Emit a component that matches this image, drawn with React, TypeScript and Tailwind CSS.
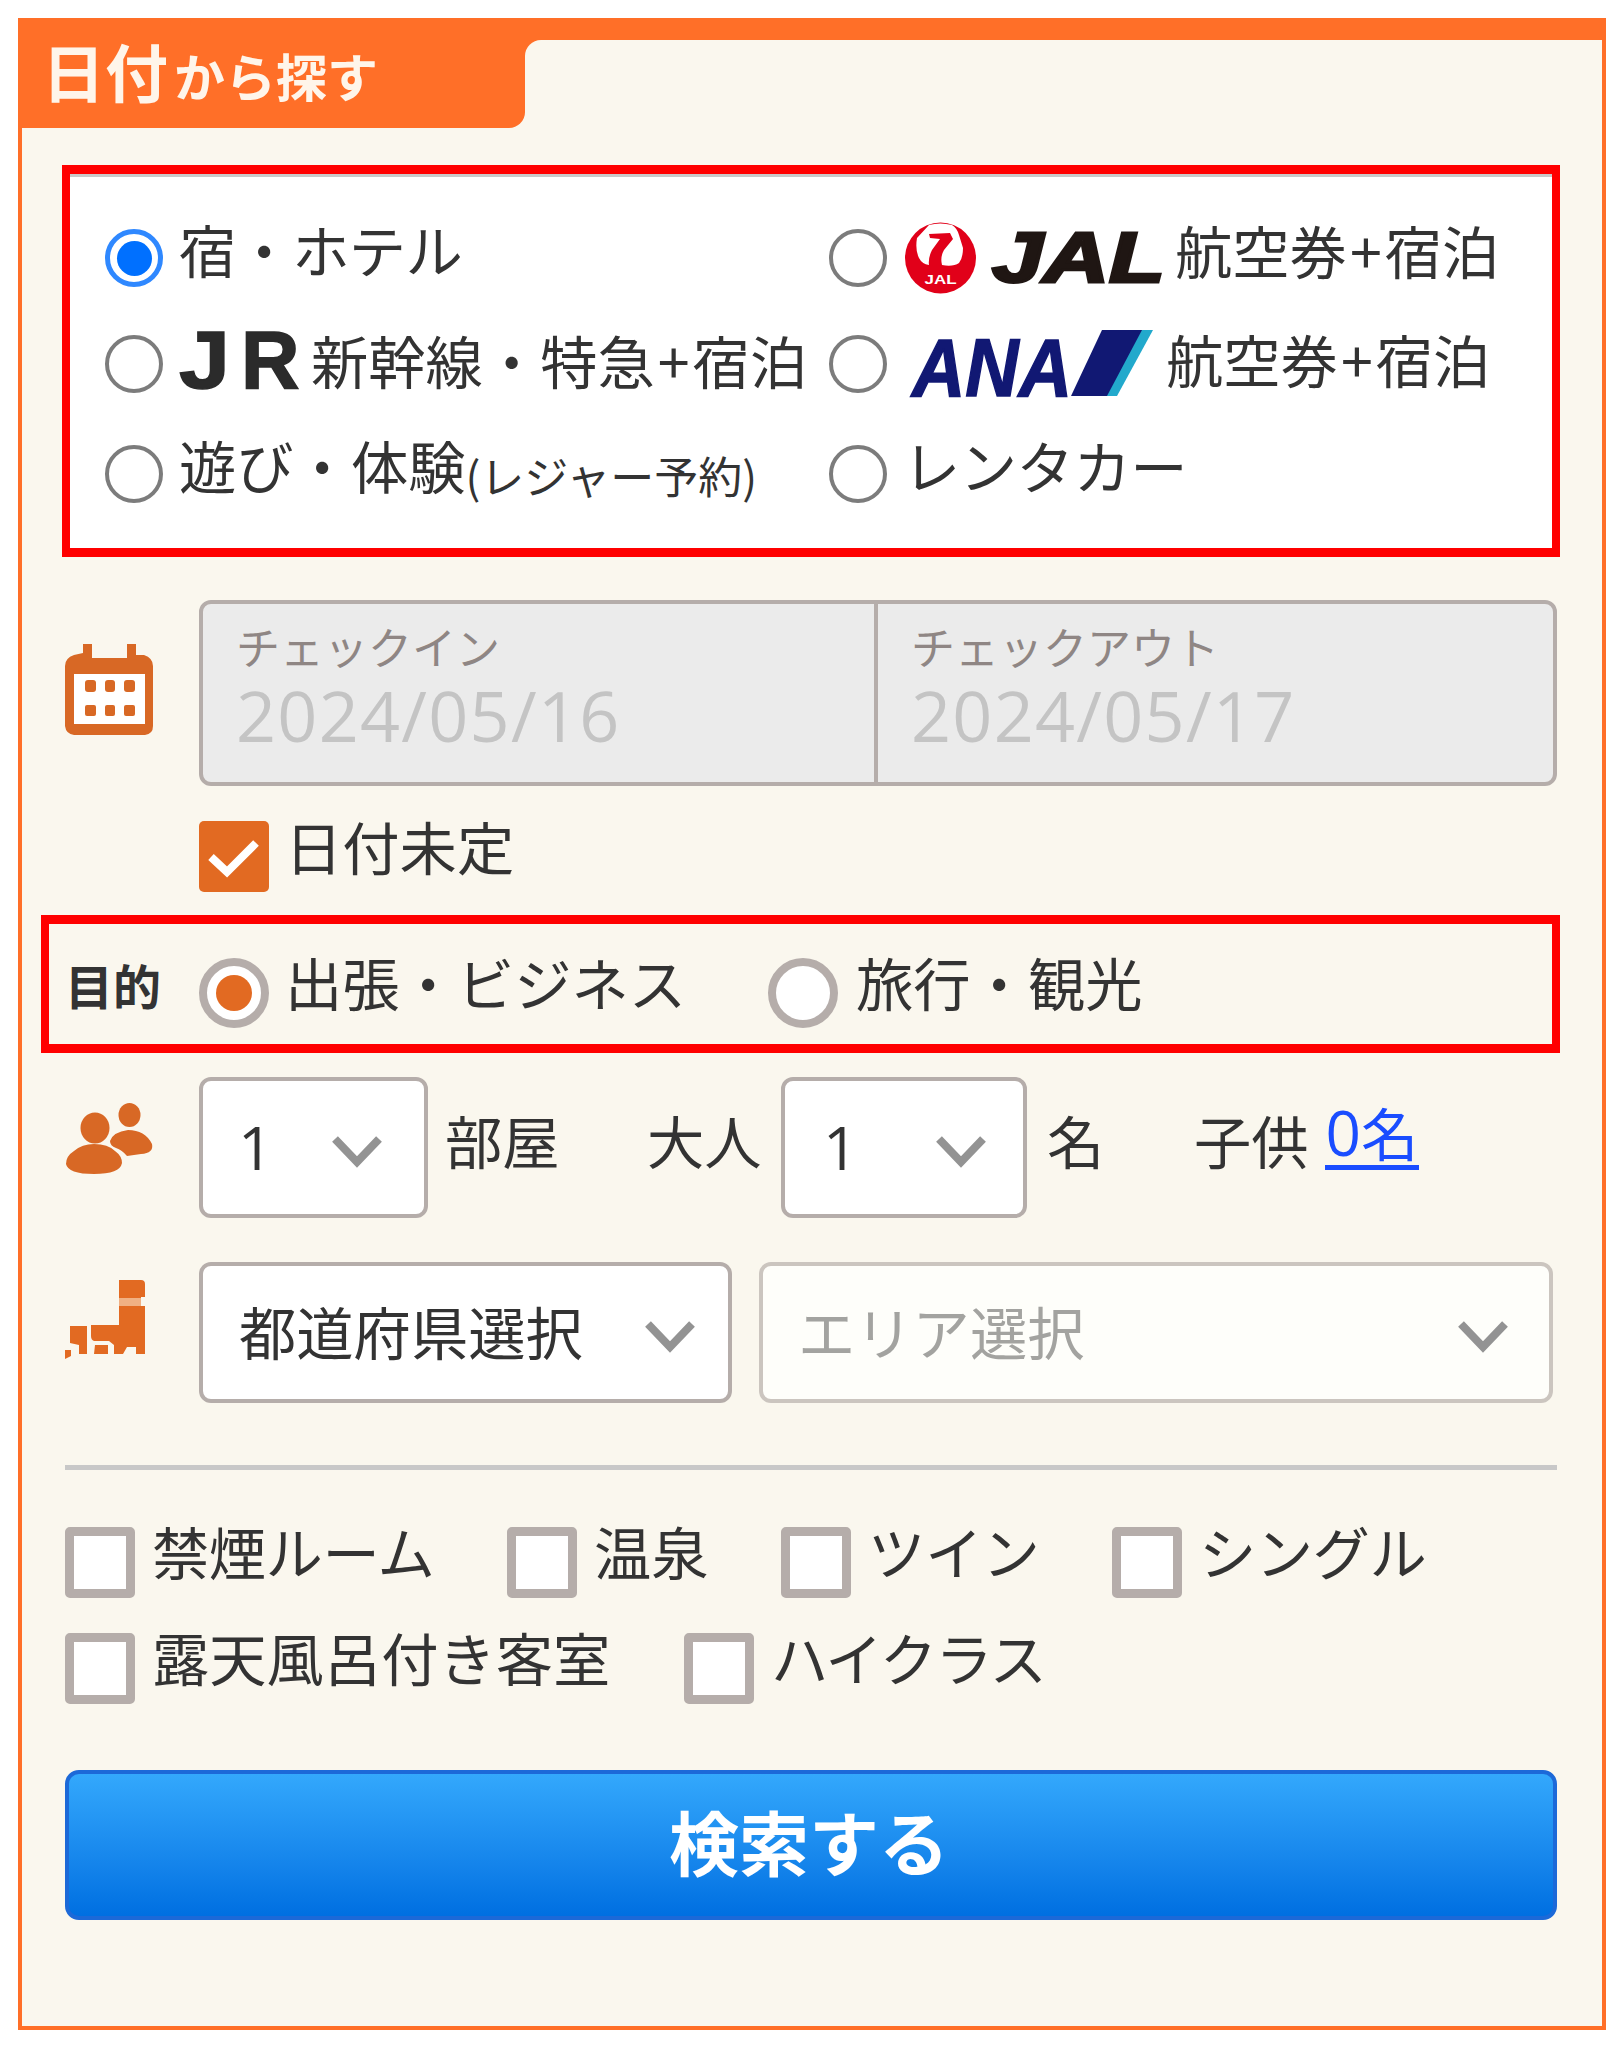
import type { ReactNode } from "react";

function PlainRadio({ checked = false }: { checked?: boolean }) {
  return checked ? (
    <span className="flex size-[58px] shrink-0 items-center justify-center rounded-full border-[5px] border-[#2f88ff] bg-white">
      <span className="size-[35px] rounded-full bg-[#0070ff]" />
    </span>
  ) : (
    <span className="size-[58px] shrink-0 rounded-full border-[4px] border-[#7c7c7c] bg-white" />
  );
}

function BigRadio({ checked = false }: { checked?: boolean }) {
  return (
    <span className="flex size-[70px] shrink-0 items-center justify-center rounded-full border-[8px] border-[#b5adaa] bg-white">
      {checked && <span className="size-[36px] rounded-full bg-[#e26a22]" />}
    </span>
  );
}

function Box() {
  return <span className="h-[71px] w-[70px] shrink-0 rounded-[5px] border-[9px] border-[#b5adaa] bg-white" />;
}

function Chevron() {
  return (
    <svg width="50" height="42" viewBox="0 0 50 42" fill="none" stroke="#939393" strokeWidth="8" className="shrink-0">
      <path d="M3 12 L25 35 L47 12" />
    </svg>
  );
}

function Option({ children, className, checked }: { children: ReactNode; className: string; checked?: boolean }) {
  return (
    <label className="flex items-center">
      <PlainRadio checked={checked} />
      <span className={"flex items-center " + className}>{children}</span>
    </label>
  );
}

function PlusStay({ children }: { children: ReactNode }) {
  return (
    <>
      {children}
      <span className="mx-[3px]">+</span>宿泊
    </>
  );
}

function CalendarIcon() {
  return (
    <svg width="89" height="94" viewBox="0 0 89 94" className="mt-[43px] shrink-0">
      <path d="M18 1h9v14H62V1h9v11h8q9 3 9 11v60q0 8-8 9H9q-8-1-9-9V23q0-8 9-11l9-2z" fill="#d86825" />
      <rect x="9" y="31" width="71" height="50" fill="#fff" />
      <g fill="#d86825">
        <rect x="20" y="37" width="11" height="12" rx="3" />
        <rect x="40" y="37" width="10" height="12" rx="3" />
        <rect x="59" y="37" width="11" height="12" rx="3" />
        <rect x="20" y="62" width="11" height="11" rx="2" />
        <rect x="40" y="62" width="10" height="11" rx="2" />
        <rect x="59" y="62" width="11" height="11" rx="2" />
      </g>
    </svg>
  );
}

function PeopleIcon() {
  return (
    <svg width="89" height="74" viewBox="0 0 89 74" fill="#d86825" className="mt-[26px] shrink-0">
      <ellipse cx="30" cy="25" rx="14.500" ry="15.500" />
      <path d="M1 61q0-8 8-13 8-7 20-7 14 0 21 7 7 5 7 12-2 11-28 11T1 61z" />
      <ellipse cx="64.500" cy="12" rx="11" ry="12" />
      <path d="M45 38q3-9 18-11 17 0 24 14 2 9-11 10l-14 2q-5-6-11-8-6-2-6-7z" />
    </svg>
  );
}

function JapanIcon() {
  return (
    <svg width="81" height="81" viewBox="0 0 81 81" fill="#e26a22" className="mt-[17px] shrink-0">
      <path d="M54 1h22q4 0 4 4v13h-4v9h-22z" />
      <path d="M54 19h22v8H54z" fill="#f0b083" />
      <path d="M54 27h26v48h-9v-7h-9l-4 7h-9V66l-5-4H29q-3-1-3-5V46h28z" />
      <path d="M5 47h17v28h-8V66l-9-2z" />
      <path d="M30 66h13v9H29zM0 71h6v6l-6 3z" />
    </svg>
  );
}

function CraneLogo() {
  return (
    <svg width="73" height="72" viewBox="0 0 73 72" className="ml-[17px] shrink-0">
      <circle cx="36.500" cy="36" r="35.500" fill="#e10019" />
      <path
        d="M25 3q11-3 23 0 5 3 7 10l4 13q0 10-4 15-6 4-17 2-2-8 2-15l9-11-3-6-21 1 1 4 10 1-8 11q-4 8-3 15-7-1-10-7-4-8-2-20z"
        fill="#fff"
      />
      <text x="36.500" y="62" fill="#fff" fontSize="13" fontWeight="700" textAnchor="middle" textLength="32" lengthAdjust="spacingAndGlyphs" fontFamily="Liberation Sans, sans-serif">
        JAL
      </text>
    </svg>
  );
}

function JalWordmark() {
  return (
    <svg width="180" height="90" viewBox="0 -15 180 90" className="ml-[12px] shrink-0 overflow-visible">
      <text x="3" y="54" fill="#1f1613" stroke="#1f1613" strokeWidth="3" fontSize="70" fontWeight="700" fontStyle="italic" textLength="173" lengthAdjust="spacingAndGlyphs" fontFamily="Liberation Sans, sans-serif">
        JAL
      </text>
    </svg>
  );
}

function JrWordmark() {
  return (
    <svg width="126" height="90" viewBox="0 -13 126 90" className="ml-[16px] shrink-0 overflow-visible">
      <g fill="#2b2b2b" stroke="#2b2b2b" strokeWidth="1.500" fontSize="81" fontWeight="700" fontFamily="Liberation Sans, sans-serif">
        <text x="0" y="56" textLength="51" lengthAdjust="spacingAndGlyphs">
          J
        </text>
        <text x="62" y="56">
          R
        </text>
      </g>
    </svg>
  );
}

function AnaLogo() {
  return (
    <svg width="250" height="100" viewBox="0 -15 250 100" className="ml-[21px] shrink-0 overflow-visible">
      <text x="4" y="67" fill="#111873" stroke="#111873" strokeWidth="1.500" fontSize="81" fontWeight="700" fontStyle="italic" textLength="160" lengthAdjust="spacingAndGlyphs" fontFamily="Liberation Sans, sans-serif">
        ANA
      </text>
      <path d="M194 1h46l-37 66h-40z" fill="#111873" />
      <path d="M234 1h11l-36 66h-10z" fill="#22a9cc" />
    </svg>
  );
}

function Feature({ label, className }: { label: string; className: string }) {
  return (
    <label className={"flex h-[71px] " + className}>
      <Box />
      <span className="ml-[17px] -mt-[5px]">{label}</span>
    </label>
  );
}

function DateField({ label, value }: { label: string; value: string }) {
  return (
    <>
      <div className="text-[44px] text-[#8f8684]">{label}</div>
      <div className="mt-[12px] font-['Open_Sans'] text-[70px] tracking-[1.3px] text-[#c4c4c4]">{value}</div>
    </>
  );
}

export default function App() {
  return (
    <div className="h-[2048px] w-[1623px] bg-white pt-[18px] pl-[18px] font-['Noto_Sans_CJK_JP',sans-serif] text-[57.3px] leading-none whitespace-nowrap text-[#333]">
      <div className="h-[2012px] w-[1588px] border-x-4 border-t-[22px] border-b-4 border-[#ff6f28] bg-[#faf7ee]">
        <header className="flex h-[88px]">
          <div className="flex h-[88px] w-[503px] items-baseline rounded-br-[16px] bg-[#ff6f28] pl-[20px] font-bold text-[#fff5ea]">
            <span className="-mt-[2px] text-[63px]">日付</span>
            <span className="ml-[6px] text-[51px]">から探す</span>
          </div>
          <div className="h-[44px] flex-1 bg-[#ff6f28]">
            <div className="h-full rounded-tl-[16px] bg-[#faf7ee]" />
          </div>
        </header>

        <main className="ml-[43px] w-[1492px]">
          <section className="-ml-[3px] mt-[37px] h-[392px] w-[1498px] border-x-8 border-y-9 border-[#ff0000] bg-white">
            <div className="grid h-full grid-cols-[724px_1fr] grid-rows-[110px_102px_118px] border-t-[3px] border-[#c9c9c9] pt-[26px] pl-[35px]">
              <Option checked className="ml-[16px] pb-[18px] tracking-[-0.7px]">
                宿・ホテル
              </Option>
              <Option className="">
                <CraneLogo />
                <JalWordmark />
                <span className="ml-[6px] pb-[16px]">
                  <PlusStay>航空券</PlusStay>
                </span>
              </Option>
              <Option className="">
                <JrWordmark />
                <span className="ml-[6px] pb-[8px]">
                  <PlusStay>新幹線・特急</PlusStay>
                </span>
              </Option>
              <Option className="">
                <AnaLogo />
                <span className="ml-[8px] pb-[10px]">
                  <PlusStay>航空券</PlusStay>
                </span>
              </Option>
              <Option className="ml-[16px] pb-[18px]">
                遊び・体験<span className="pt-[20px] text-[44px]">(レジャー予約)</span>
              </Option>
              <Option className="ml-[16px] pb-[18px] tracking-[-0.5px]">レンタカー</Option>
            </div>
          </section>

          <section className="mt-[43px] flex h-[186px]">
            <CalendarIcon />
            <div className="ml-[45px] flex flex-1 rounded-[12px] border-4 border-[#b5adaa] bg-[#ebebeb]">
              <div className="w-[675px] border-r-4 border-[#b5adaa] pt-[20px] pl-[33px]">
                <DateField label="チェックイン" value="2024/05/16" />
              </div>
              <div className="pt-[20px] pl-[33px]">
                <DateField label="チェックアウト" value="2024/05/17" />
              </div>
            </div>
          </section>

          <label className="mt-[35px] ml-[134px] flex h-[71px]">
            <svg width="70" height="71" viewBox="0 0 70 71" className="shrink-0">
              <rect width="70" height="71" rx="5" fill="#e26a22" />
              <path d="M12 36 L28 51 L57 22" fill="none" stroke="#fff" strokeWidth="8" />
            </svg>
            <span className="ml-[16px] -mt-[4px]">日付未定</span>
          </label>

          <section className="-ml-[24px] mt-[23px] flex h-[138px] w-[1519px] items-center border-x-8 border-y-9 border-[#ff0000] pt-[18px] pl-[16px]">
            <span className="w-[134px] pb-[18px] text-[48px] font-bold">目的</span>
            <BigRadio checked />
            <span className="ml-[16px] w-[483px] pb-[22px]">出張・ビジネス</span>
            <BigRadio />
            <span className="ml-[18px] pb-[22px]">旅行・観光</span>
          </section>

          <section className="mt-[24px] flex h-[141px]">
            <PeopleIcon />
            <div className="ml-[45px] flex w-[229px] items-center justify-between rounded-[12px] border-4 border-[#b5adaa] bg-white pr-[42px] pl-[35px]">
              <span className="pb-[3px] font-['Open_Sans'] text-[61px]">1</span>
              <Chevron />
            </div>
            <span className="mt-[34px] ml-[17px] w-[202px]">部屋</span>
            <span className="mt-[34px] w-[134px]">大人</span>
            <div className="flex w-[246px] items-center justify-between rounded-[12px] border-4 border-[#b5adaa] bg-white pr-[37px] pl-[38px]">
              <span className="pb-[3px] font-['Open_Sans'] text-[61px]">1</span>
              <Chevron />
            </div>
            <span className="mt-[34px] ml-[20px] w-[147px]">名</span>
            <span className="mt-[34px]">子供</span>
            <span className="mt-[24px] ml-[16px] flex h-[69px] items-baseline border-b-[5px] border-[#1a4dff] px-[1px] text-[#1a4dff]">
              <span className="font-['Open_Sans'] text-[62px]">0</span>名
            </span>
          </section>

          <section className="mt-[44px] flex h-[141px]">
            <JapanIcon />
            <div className="ml-[53px] flex w-[533px] items-center justify-between rounded-[12px] border-4 border-[#b5adaa] bg-white pr-[33px] pl-[36px]">
              <span className="pb-[4px]">都道府県選択</span>
              <Chevron />
            </div>
            <div className="ml-[27px] flex w-[794px] items-center justify-between rounded-[12px] border-4 border-[#cbc5bf] bg-[#fefefa] pr-[41px] pl-[35px] text-[#a3a3a0]">
              <span className="pb-[4px]">エリア選択</span>
              <Chevron />
            </div>
          </section>

          <hr className="mt-[62px] h-[5px] border-0 bg-[#c8c8c8]" />

          <section className="mt-[57px] flex">
            <Feature label="禁煙ルーム" className="w-[442px] tracking-[-0.5px]" />
            <Feature label="温泉" className="w-[274px]" />
            <Feature label="ツイン" className="w-[331px]" />
            <Feature label="シングル" className="tracking-[-0.5px]" />
          </section>
          <section className="mt-[35px] flex">
            <Feature label="露天風呂付き客室" className="w-[619px]" />
            <Feature label="ハイクラス" className="tracking-[-1.8px]" />
          </section>

          <button className="mt-[66px] flex h-[150px] w-full items-center justify-center rounded-[14px] border-4 border-[#1c69d8] bg-linear-to-b from-[#33a8fc] to-[#006fe1] pr-[4px] pb-[8px] text-[70px] font-bold text-white">
            検索する
          </button>
        </main>
      </div>
    </div>
  );
}
